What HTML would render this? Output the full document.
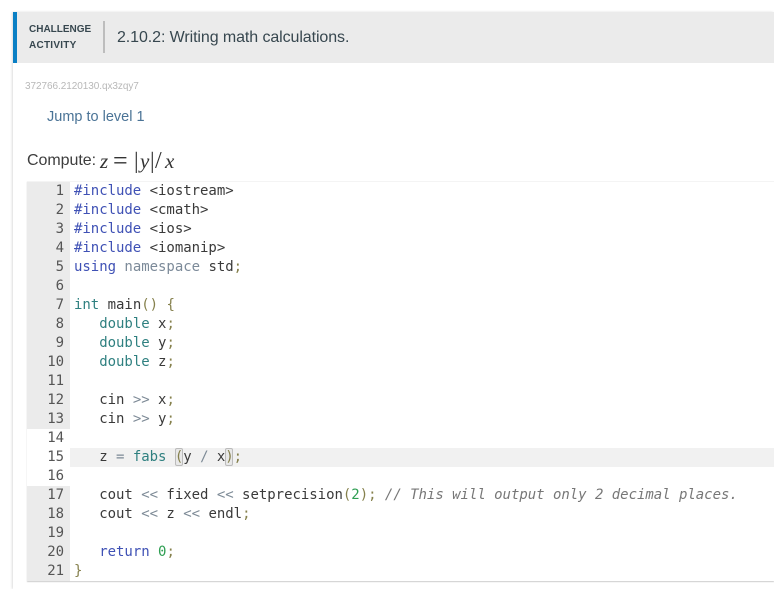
<!DOCTYPE html>
<html><head><meta charset="utf-8"><style>
html,body{margin:0;padding:0;background:#fff}
body{width:774px;height:589px;position:relative;overflow:hidden;font-family:"Liberation Sans",sans-serif}
.a{position:absolute;white-space:nowrap}
.card{left:13px;top:12px;width:761px;height:577px;box-shadow:-1px 0 2px #ddd;background:#fff}
.code{left:0;font:14px/19px "DejaVu Sans Mono","Liberation Mono",monospace;color:#3a3a3a;letter-spacing:-.027px}
.l{position:absolute;left:74px;white-space:pre;height:19px}
.n{position:absolute;left:27px;width:37px;text-align:right;color:#555;height:19px}
.k{color:#3f51b5}.t{color:#2f8080}.g{color:#7c8a99}.p{color:#85804c}.o{color:#7d8a96}.z{color:#2e9e52}
.c{color:#777;font-style:italic}
.m{font:italic 21px/24px "Liberation Serif",serif;color:#333;top:149px}
.r{font-style:normal}
</style></head><body>
<div class="a card"></div>
<div class="a" style="left:13px;top:12px;width:761px;height:51px;background:#ebebeb"></div>
<div class="a" style="left:13px;top:12px;width:4px;height:51px;background:#0a7fc4"></div>
<div class="a" style="left:29px;top:22px;font:bold 10px/16px 'Liberation Sans',sans-serif;color:#37474f">CHALLENGE<br><span style="letter-spacing:.25px">ACTIVITY</span></div>
<div class="a" style="left:103px;top:21px;width:2px;height:32px;background:#bdbdbd"></div>
<div class="a" style="left:117px;top:28px;font:16px/19px 'Liberation Sans',sans-serif;color:#37474f;letter-spacing:-.09px">2.10.2: Writing math calculations.</div>
<div class="a" style="left:25px;top:81px;font:10px/12px 'Liberation Sans',sans-serif;color:#b8b8b8;letter-spacing:-.06px">372766.2120130.qx3zqy7</div>
<div class="a" style="left:47px;top:108px;font:14.5px/18px 'Liberation Sans',sans-serif;color:#4a7396">Jump to level 1</div>
<div class="a" style="left:27px;top:151px;font:16px/20px 'Liberation Sans',sans-serif;color:#3d3d3d;letter-spacing:-.05px">Compute:</div>
<div class="a m" style="left:100px">z</div>
<div class="a m r" style="left:113px;font-size:26px;line-height:24px">=</div>
<div class="a m r" style="left:134px;font-size:23px">|</div>
<div class="a m" style="left:140px">y</div>
<div class="a m r" style="left:150px;font-size:23px">|</div>
<div class="a m r" style="left:155px;font-size:24px">/</div>
<div class="a m" style="left:165px">x</div>

<div class="a" style="left:27px;top:181px;width:747px;height:400px;box-shadow:0 1px 1px #ccc;background:#fff;border-top:1px solid #f4f4f4;box-sizing:border-box"></div>
<div class="a" style="left:27px;top:182px;width:43px;height:247px;background:#ebebeb"></div>
<div class="a" style="left:27px;top:486px;width:43px;height:95px;background:#ebebeb"></div>
<div class="a" style="left:70px;top:448px;width:704px;height:19px;background:#f1f1f1"></div>
<div class="a" style="left:175px;top:448px;width:8px;height:18px;background:#e8e8e8;border:1px solid #bbb;box-sizing:border-box;border-radius:2px"></div>
<div class="a" style="left:225px;top:448px;width:8px;height:18px;background:#e8e8e8;border:1px solid #bbb;box-sizing:border-box;border-radius:2px"></div>

<div class="a code" style="top:1px;width:774px;height:588px">
<div class="n" style="top:181px">1</div><div class="l" style="top:181px"><span class="k">#include</span> &lt;iostream&gt;</div>
<div class="n" style="top:200px">2</div><div class="l" style="top:200px"><span class="k">#include</span> &lt;cmath&gt;</div>
<div class="n" style="top:219px">3</div><div class="l" style="top:219px"><span class="k">#include</span> &lt;ios&gt;</div>
<div class="n" style="top:238px">4</div><div class="l" style="top:238px"><span class="k">#include</span> &lt;iomanip&gt;</div>
<div class="n" style="top:257px">5</div><div class="l" style="top:257px"><span class="k">using</span> <span class="g">namespace</span> std<span class="p">;</span></div>
<div class="n" style="top:276px">6</div>
<div class="n" style="top:295px">7</div><div class="l" style="top:295px"><span class="t">int</span> main<span class="p">()</span> <span class="p">{</span></div>
<div class="n" style="top:314px">8</div><div class="l" style="top:314px">   <span class="t">double</span> x<span class="p">;</span></div>
<div class="n" style="top:333px">9</div><div class="l" style="top:333px">   <span class="t">double</span> y<span class="p">;</span></div>
<div class="n" style="top:352px">10</div><div class="l" style="top:352px">   <span class="t">double</span> z<span class="p">;</span></div>
<div class="n" style="top:371px">11</div>
<div class="n" style="top:390px">12</div><div class="l" style="top:390px">   cin <span class="o">&gt;&gt;</span> x<span class="p">;</span></div>
<div class="n" style="top:409px">13</div><div class="l" style="top:409px">   cin <span class="o">&gt;&gt;</span> y<span class="p">;</span></div>
<div class="n" style="top:428px">14</div>
<div class="n" style="top:447px">15</div><div class="l" style="top:447px">   z <span class="o">=</span> <span class="t">fabs</span> <span class="p">(</span>y <span class="o">/</span> x<span class="p">);</span></div>
<div class="n" style="top:466px">16</div>
<div class="n" style="top:485px">17</div><div class="l" style="top:485px">   cout <span class="o">&lt;&lt;</span> fixed <span class="o">&lt;&lt;</span> setprecision<span class="p">(</span><span class="z">2</span><span class="p">);</span> <span class="c">// This will output only 2 decimal places.</span></div>
<div class="n" style="top:504px">18</div><div class="l" style="top:504px">   cout <span class="o">&lt;&lt;</span> z <span class="o">&lt;&lt;</span> endl<span class="p">;</span></div>
<div class="n" style="top:523px">19</div>
<div class="n" style="top:542px">20</div><div class="l" style="top:542px">   <span class="k">return</span> <span class="z">0</span><span class="p">;</span></div>
<div class="n" style="top:561px">21</div><div class="l" style="top:561px"><span class="p">}</span></div>
</div>
</body></html>
